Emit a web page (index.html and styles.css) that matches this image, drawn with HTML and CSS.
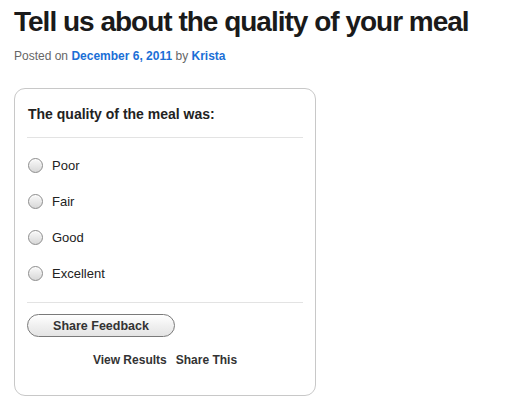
FILE: index.html
```html
<!DOCTYPE html>
<html>
<head>
<meta charset="utf-8">
<link rel="stylesheet" href="styles.css">
</head>
<body>
<div class="page">
  <h1 class="title">Tell us about the quality of your meal</h1>
  <div class="meta">Posted on <a href="#">December 6, 2011</a> by <a href="#">Krista</a></div>
  <div class="poll">
    <div class="question">The quality of the meal was:</div>
    <div class="answers">
      <label class="answer"><span class="radio"></span>Poor</label>
      <label class="answer"><span class="radio"></span>Fair</label>
      <label class="answer"><span class="radio"></span>Good</label>
      <label class="answer"><span class="radio"></span>Excellent</label>
    </div>
    <div class="actions">
      <button class="btn">Share Feedback</button>
    </div>
    <div class="links"><a href="#">View Results</a><a href="#">Share This</a></div>
  </div>
</div>
</body>
</html>
```
FILE: styles.css
```css
html, body { margin: 0; padding: 0; background: #fff; }
body { font-family: "Liberation Sans", Arial, Helvetica, sans-serif; color: #222; }
.page { padding: 6px 14px 0 14px; }
.title {
  margin: 0;
  font-size: 28px;
  font-weight: bold;
  color: #1a1a1a;
  line-height: 32px;
  letter-spacing: -1px;
  white-space: nowrap;
}
.meta {
  margin-top: 11px;
  font-size: 12px;
  color: #666;
  line-height: 14px;
}
.meta a { color: #1b6fd6; font-weight: bold; text-decoration: none; }
.poll {
  margin-top: 25px;
  width: 302px;
  height: 308px;
  box-sizing: border-box;
  border: 1px solid #c8c8c8;
  border-radius: 11px;
  padding: 0 12px;
}
.question {
  font-size: 14px;
  font-weight: bold;
  color: #222;
  padding: 17px 0 0 1px;
  height: 31px;
  border-bottom: 1px solid #e3e3e3;
  line-height: 16px;
}
.answers {
  display: flex;
  flex-direction: column;
  padding: 9px 0 11px 0;
  border-bottom: 1px solid #e3e3e3;
}
.answer {
  display: flex;
  align-items: center;
  height: 36px;
  font-size: 13px;
  color: #222;
}
.radio {
  width: 13px;
  height: 13px;
  border-radius: 50%;
  border: 1px solid #8d8d8d;
  background: linear-gradient(#f9f9f9, #d8d8d8);
  box-shadow: inset 0 1px 1px rgba(255,255,255,0.8);
  margin: 0 9px 0 1px;
  flex: none;
}
.actions { padding-top: 11px; }
.btn {
  width: 148px;
  height: 23px;
  border: 1px solid #7a7a7a;
  border-radius: 12px;
  background: linear-gradient(#ffffff, #f0f0f0 50%, #e4e4e4);
  font-family: "Liberation Sans", Arial, sans-serif;
  font-weight: bold;
  font-size: 12.5px;
  color: #333;
  padding: 0;
  margin: 0;
}
.links {
  display: flex;
  justify-content: center;
  gap: 9px;
  margin-top: 16px;
  font-size: 12px;
  font-weight: bold;
}
.links a { color: #333; text-decoration: none; }
```
